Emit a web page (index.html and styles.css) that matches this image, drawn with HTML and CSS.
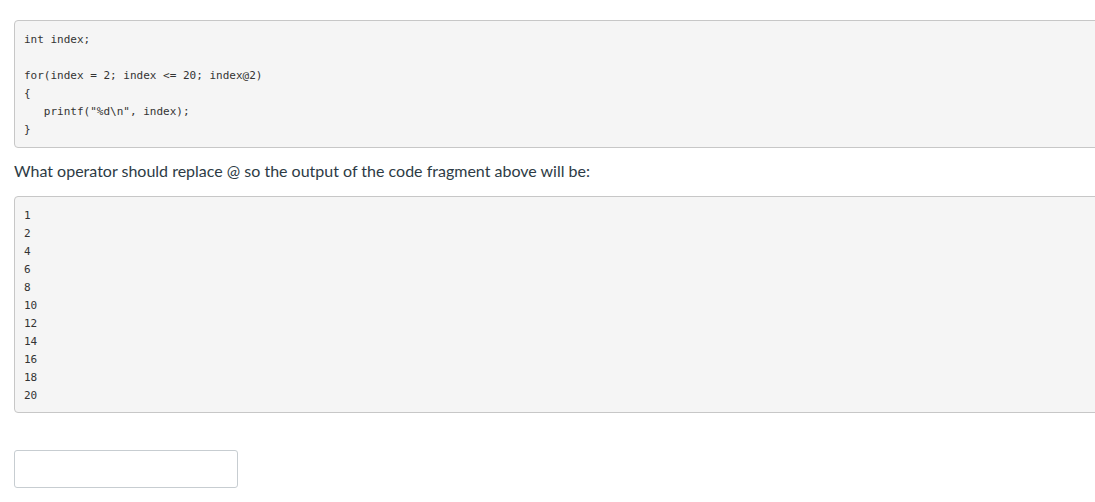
FILE: index.html
```html
<!DOCTYPE html>
<html>
<head>
<meta charset="utf-8">
<link rel="stylesheet" href="styles.css">
</head>
<body>
<div class="page">
<pre class="code">int index;

for(index = 2; index &lt;= 20; index@2)
{
   printf("%d\n", index);
}</pre>
<p class="question">What operator should replace @ so the output of the code fragment above will be:</p>
<pre class="code output">1
2
4
6
8
10
12
14
16
18
20</pre>
<div class="answer"><input class="answer-input" type="text"></div>
</div>
</body>
</html>
```
FILE: styles.css
```css
html, body {
  margin: 0;
  padding: 0;
  overflow: hidden;
  background: #fff;
}
.page {
  padding: 20px 0 0 14px;
}
.code {
  margin: 0;
  width: calc(100% + 40px);
  box-sizing: border-box;
  background: #f5f5f5;
  border: 1px solid #c7c7c7;
  border-radius: 4px;
  padding: 10px 9px 8px 9px;
  font-family: "DejaVu Sans Mono", "Liberation Mono", monospace;
  font-size: 11px;
  line-height: 18px;
  color: #333;
}
.question {
  margin: 11px 0 13px 0;
  font-family: Lato, "Noto Sans", sans-serif;
  font-size: 16px;
  line-height: 24px;
  color: #2d3b45;
}
.output {
  padding-top: 10px;
  padding-bottom: 7px;
}
.answer {
  margin-top: 37px;
}
.answer-input {
  display: block;
  width: 224px;
  height: 38px;
  box-sizing: border-box;
  border: 1px solid #c7cdd1;
  border-radius: 3px;
  background: #fff;
  margin: 0;
  padding: 0 8px;
}
```
